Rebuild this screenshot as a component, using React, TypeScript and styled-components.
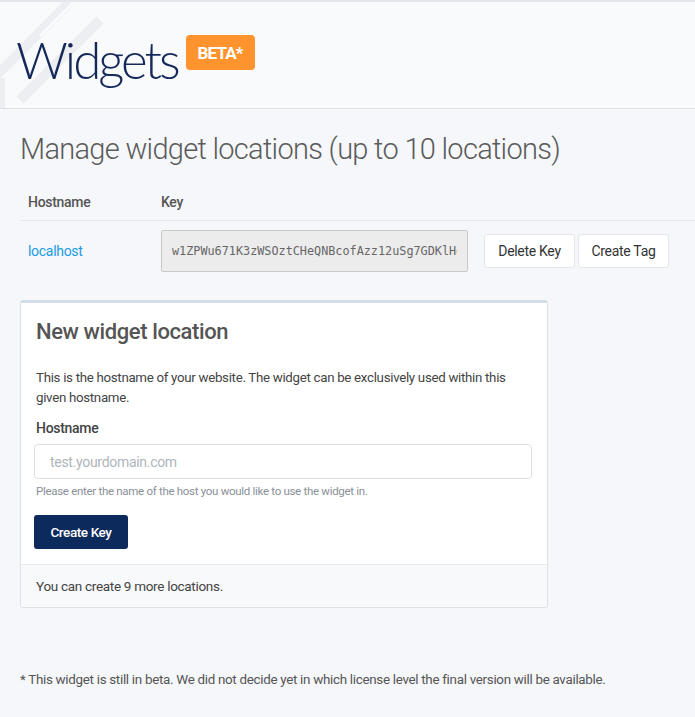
import styled, { createGlobalStyle } from 'styled-components';

const GlobalStyle = createGlobalStyle`
  html, body {
    margin: 0;
    padding: 0;
    background: #f5f7fa;
    font-family: Roboto, "Liberation Sans", sans-serif;
    color: #444;
  }
  * { box-sizing: border-box; }
`;

const Page = styled.div`
  width: 695px;
  min-height: 717px;
  border-top: 2px solid #e3e6ea;
  overflow: hidden;
`;

const Header = styled.header`
  position: relative;
  height: 107px;
  background: #f9fafc;
  border-bottom: 1px solid #dde1e6;
  display: flex;
  align-items: flex-start;
  padding: 24px 0 0 16px;
  gap: 8px;
  overflow: hidden;
`;

const Watermark = styled.svg`
  position: absolute;
  left: 0;
  top: -2px;
`;

const Title = styled.h1`
  position: relative;
  margin: 0;
  font-family: Lato, sans-serif;
  font-weight: 300;
  font-size: 51px;
  line-height: 68px;
  color: #14295a;
  letter-spacing: -3px;
`;

const Badge = styled.span`
  position: relative;
  margin-top: 9px;
  height: 35px;
  width: 69px;
  display: flex;
  align-items: center;
  justify-content: center;
  background: #ff942f;
  color: #fff;
  border-radius: 4px;
  font-weight: 700;
  font-size: 17px;
  letter-spacing: -0.8px;
`;

const Main = styled.main`
  padding: 0 0 0 20px;
`;

const SectionTitle = styled.h2`
  margin: 22px 0 0;
  font-weight: 300;
  font-size: 29px;
  line-height: 36px;
  color: #5b5b5b;
  letter-spacing: -0.7px;
`;

const Table = styled.div`
  margin-top: 16px;
`;

const HeadRow = styled.div`
  display: flex;
  height: 38px;
  align-items: center;
  border-bottom: 1px solid #e5e8ec;
  font-size: 14px;
  font-weight: 500;
  color: #555;
  letter-spacing: -0.3px;
`;

const Cell = styled.div<{ $w?: number }>`
  width: ${(p) => (p.$w ? `${p.$w}px` : 'auto')};
  padding-left: 8px;
  flex-shrink: 0;
`;

const BodyRow = styled.div`
  display: flex;
  align-items: center;
  height: 60px;
  font-size: 14px;
`;

const HostLink = styled.a`
  color: #1a9be0;
  text-decoration: none;
  letter-spacing: -0.3px;
`;

const KeyField = styled.input`
  width: 307px;
  height: 42px;
  background: #ececec;
  border: 1px solid #c8c8c8;
  border-radius: 2px;
  padding: 0 10px;
  font-family: "DejaVu Sans Mono", "Liberation Mono", monospace;
  font-size: 11.8px;
  color: #666;
  outline: none;
`;

const Buttons = styled.div`
  display: flex;
  gap: 3px;
  margin-left: 16px;
`;

const LightButton = styled.button`
  width: 91px;
  height: 34px;
  background: #fff;
  border: 1px solid #e4e6e9;
  border-radius: 3px;
  font-family: inherit;
  font-size: 14px;
  color: #333;
  letter-spacing: -0.3px;
`;

const Card = styled.section`
  margin-top: 19px;
  width: 528px;
  background: #fff;
  border: 1px solid #dde2e7;
  border-top: 3px solid #d3dde6;
  border-radius: 3px;
`;

const CardBody = styled.div`
  padding: 14px 15px 15px 15px;
`;

const CardTitle = styled.h3`
  margin: 0;
  font-size: 22px;
  font-weight: 500;
  line-height: 30px;
  color: #555;
  letter-spacing: -0.4px;
`;

const Text = styled.p`
  margin: 21px 0 0;
  font-size: 13.3px;
  line-height: 20px;
  color: #444;
  letter-spacing: -0.3px;
`;

const Label = styled.label`
  display: block;
  margin-top: 12px;
  font-size: 14px;
  font-weight: 500;
  color: #444;
  letter-spacing: -0.3px;
`;

const TextInput = styled.input`
  display: block;
  margin: 8px 0 0 -2px;
  width: 498px;
  height: 35px;
  border: 1px solid #dcdfe3;
  border-radius: 4px;
  padding: 0 15px;
  font-family: inherit;
  font-size: 14px;
  color: #444;
  outline: none;
  letter-spacing: -0.3px;
  &::placeholder {
    color: #b0b5bb;
  }
`;

const Help = styled.div`
  margin-top: 5px;
  font-size: 11.5px;
  color: #8a9099;
  letter-spacing: -0.3px;
`;

const PrimaryButton = styled.button`
  display: block;
  margin: 17px 0 0 -2px;
  width: 94px;
  height: 34px;
  background: #0c2a5b;
  border: none;
  border-radius: 3px;
  color: #fff;
  font-family: inherit;
  font-size: 13.5px;
  font-weight: 500;
  letter-spacing: -0.4px;
`;

const CardFooter = styled.div`
  height: 43px;
  display: flex;
  align-items: center;
  padding: 0 15px;
  background: #f8f9fa;
  border-top: 1px solid #e8ebee;
  font-size: 13.5px;
  color: #444;
  letter-spacing: -0.3px;
`;

const Footnote = styled.p`
  margin: 64px 0 0;
  font-size: 13.4px;
  color: #555;
  letter-spacing: -0.3px;
`;

export default function App() {
  return (
    <Page>
      <GlobalStyle />
      <Header>
        <Watermark width="120" height="110" viewBox="0 0 120 110">
          <g fill="none" stroke="#eceef1" strokeWidth="10">
            <path d="M-10 82 L70 2" />
            <path d="M20 100 L100 20" />
            <path d="M0 78 L0 110" />
          </g>
          <path d="M40 36 L78 -2" stroke="#fafbfc" strokeWidth="3" />
        </Watermark>
        <Title>Widgets</Title>
        <Badge>BETA*</Badge>
      </Header>
      <Main>
        <SectionTitle>Manage widget locations (up to 10 locations)</SectionTitle>
        <Table>
          <HeadRow>
            <Cell $w={133}>Hostname</Cell>
            <Cell>Key</Cell>
          </HeadRow>
          <BodyRow>
            <Cell $w={141}>
              <HostLink href="#">localhost</HostLink>
            </Cell>
            <KeyField readOnly value="w1ZPWu671K3zWSOztCHeQNBcofAzz12uSg7GDKlHq8xYe" />
            <Buttons>
              <LightButton>Delete Key</LightButton>
              <LightButton>Create Tag</LightButton>
            </Buttons>
          </BodyRow>
        </Table>
        <Card>
          <CardBody>
            <CardTitle>New widget location</CardTitle>
            <Text>
              This is the hostname of your website. The widget can be exclusively used within this
              given hostname.
            </Text>
            <Label>Hostname</Label>
            <TextInput placeholder="test.yourdomain.com" />
            <Help>Please enter the name of the host you would like to use the widget in.</Help>
            <PrimaryButton>Create Key</PrimaryButton>
          </CardBody>
          <CardFooter>You can create 9 more locations.</CardFooter>
        </Card>
        <Footnote>
          * This widget is still in beta. We did not decide yet in which license level the final
          version will be available.
        </Footnote>
      </Main>
    </Page>
  );
}
